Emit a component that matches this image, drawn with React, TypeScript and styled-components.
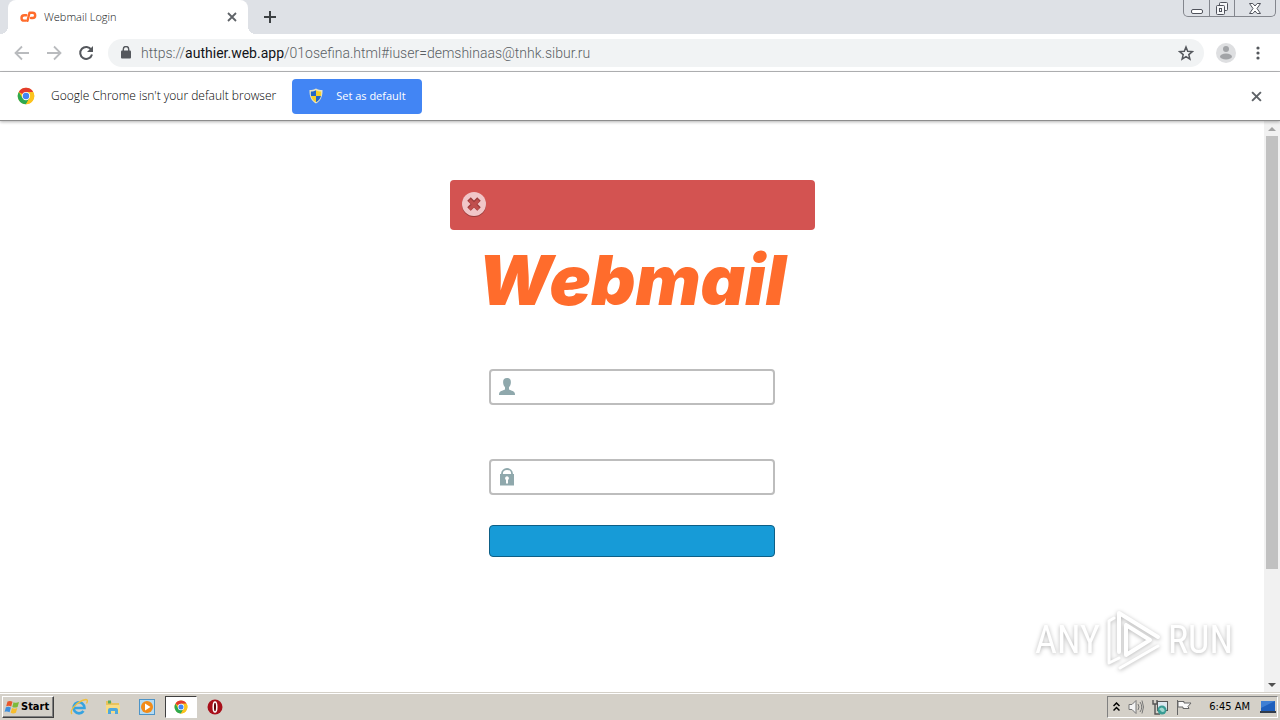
import React from "react";
import styled, { createGlobalStyle, css } from "styled-components";

const GlobalStyle = createGlobalStyle`
  * { box-sizing: border-box; }
  body { margin: 0; background: #fff; font-family: "Open Sans", "Noto Sans", sans-serif; }
  button, input { font: inherit; }
`;

const Screen = styled.div`
  display: flex;
  flex-direction: column;
  min-height: 100vh;
`;

const iconButton = css`
  display: flex;
  align-items: center;
  justify-content: center;
  padding: 0;
  border: 0;
  background: none;
`;

const IconButton = styled.button<{ $size: number }>`
  ${iconButton}
  flex: none;
  width: ${(p) => p.$size}px;
  height: ${(p) => p.$size}px;
`;

const TabStrip = styled.header`
  display: flex;
  align-items: flex-start;
  height: 34px;
  padding: 0 4px 0 8px;
  background: #dee1e6;
`;

const Tab = styled.div`
  position: relative;
  display: flex;
  align-items: center;
  gap: 7px;
  width: 240px;
  height: 34px;
  padding: 0 8px 0 12px;
  border-radius: 8px 8px 0 0;
  background: #fff;
  &::before,
  &::after {
    content: "";
    position: absolute;
    bottom: 0;
    width: 8px;
    height: 8px;
  }
  &::before {
    right: 100%;
    background: radial-gradient(circle at 0 0, transparent 8px, #fff 8px);
  }
  &::after {
    left: 100%;
    background: radial-gradient(circle at 100% 0, transparent 8px, #fff 8px);
  }
`;

const TabTitle = styled.span`
  flex: 1;
  font-size: 11px;
  font-weight: 300;
  line-height: 16px;
  color: #101214;
`;

const NewTab = styled.div`
  display: flex;
  align-items: center;
  height: 34px;
  margin-left: 12px;
`;

const WindowControls = styled.div`
  display: flex;
  height: 17px;
  margin-left: auto;
  border: 1px solid #83868d;
  border-top: 0;
  border-radius: 0 0 5px 5px;
  overflow: hidden;
`;

const WindowButton = styled.button<{ $wide?: boolean }>`
  ${iconButton}
  width: ${(p) => (p.$wide ? 41 : 25)}px;
  & + & { border-left: 1px solid #83868d; }
`;

const Toolbar = styled.nav`
  display: flex;
  align-items: center;
  gap: 12px;
  height: 38px;
  padding: 0 12px;
  border-bottom: 1px solid #b6b7b9;
  background: #fff;
`;

const AddressBar = styled.div`
  display: flex;
  flex: 1;
  align-items: center;
  gap: 5px;
  height: 28px;
  padding: 0 8px;
  border-radius: 14px;
  background: #f1f3f4;
`;

const Address = styled.div`
  flex: 1;
  font-family: Roboto, sans-serif;
  font-size: 14px;
  font-weight: 300;
  line-height: 20px;
  color: #5a5f64;
  white-space: nowrap;
  outline: none;
`;

const Host = styled.span`
  color: #111418;
  font-weight: 400;
`;

const InfoBar = styled.section`
  position: relative;
  display: flex;
  align-items: center;
  height: 49px;
  padding: 0 14px 0 17px;
  border-bottom: 1px solid #8d8d8d;
  box-shadow: 0 1px 3px rgba(0, 0, 0, 0.3);
  background: #fff;
`;

const InfoText = styled.p`
  margin: 0 16px;
  font-size: 12px;
  font-weight: 300;
  line-height: 20px;
  color: #000;
`;

const DefaultButton = styled.button`
  display: flex;
  align-items: center;
  gap: 12px;
  height: 35px;
  padding: 0 16px;
  border: 0;
  border-radius: 4px;
  background: #4285f4;
  color: #fff;
  font-size: 11px;
  line-height: 16px;
`;

const Push = styled.div`
  margin-left: auto;
`;

const Viewport = styled.div`
  display: flex;
  flex: 1;
`;

const Page = styled.main`
  display: flex;
  flex: 1;
  flex-direction: column;
  align-items: center;
  padding-top: 59px;
`;

const Alert = styled.div`
  display: flex;
  width: 365px;
  height: 50px;
  padding: 11px;
  border-radius: 4px;
  background: #d35351;
`;

const Wordmark = styled.h1`
  margin: 16px 0 0;
  font-family: Inter, Roboto, sans-serif;
  font-size: 69px;
  font-style: italic;
  font-weight: 900;
  line-height: 68px;
  color: #ff6c2c;
`;

const Form = styled.form`
  display: flex;
  flex-direction: column;
  width: 286px;
  padding-top: 55px;
`;

const Field = styled.label<{ $gap: number }>`
  display: flex;
  align-items: center;
  gap: 8px;
  height: 36px;
  margin-bottom: ${(p) => p.$gap}px;
  padding: 0 8px;
  border: 2px solid #bdbdbd;
  border-radius: 4px;
  background: #fff;
`;

const FieldInput = styled.input`
  flex: 1;
  min-width: 0;
  height: 28px;
  padding: 0;
  border: 0;
  outline: 0;
  background: none;
  font-size: 14px;
`;

const Submit = styled.button`
  height: 32px;
  border: 1px solid #0d5f86;
  border-radius: 4px;
  background: #179bd7;
`;

const ScrollBar = styled.div`
  display: flex;
  flex-direction: column;
  align-items: center;
  width: 16px;
  background: #f1f1f1;
`;

const ScrollTrack = styled.div`
  flex: 1;
  width: 12px;
`;

const ScrollThumb = styled.div`
  height: 80%;
  background: #c1c1c1;
`;

const ScrollArrow = styled.button`
  ${iconButton}
  width: 16px;
  height: 15px;
`;

const Watermark = styled.div`
  position: absolute;
  right: 47px;
  bottom: 48px;
  display: flex;
  align-items: center;
  gap: 6px;
  color: #fff;
  font-family: "Roboto Condensed", "Open Sans Condensed", Lato, sans-serif;
  font-size: 38px;
  line-height: 64px;
  filter: drop-shadow(0 1px 2px rgba(0, 0, 0, 0.3));
`;

const TaskBar = styled.footer`
  display: flex;
  align-items: center;
  height: 28px;
  padding: 0 2px;
  border-top: 1px solid #d4d0c8;
  box-shadow: inset 0 1px 0 #fff;
  background: #d4d0c8;
  font-family: "DejaVu Sans Condensed", "DejaVu Sans", sans-serif;
  font-size: 11px;
  line-height: 16px;
`;

const StartButton = styled.button`
  display: flex;
  align-items: center;
  height: 22px;
  padding: 0 4px 0 1px;
  border: 1px solid;
  border-color: #fff #404040 #404040 #fff;
  box-shadow: inset -1px -1px 0 #808080;
  background: #d4d0c8;
  font-weight: 700;
`;

const Launchers = styled.div`
  display: flex;
  align-items: center;
  gap: 2px;
  margin-left: 9px;
`;

const Launcher = styled.button<{ $active?: boolean }>`
  ${iconButton}
  width: 32px;
  height: 22px;
  ${(p) =>
    p.$active &&
    css`
      border: 1px solid;
      border-color: #404040 #fff #fff #404040;
      background: #fff;
    `}
`;

const Tray = styled.div`
  display: flex;
  align-items: center;
  height: 22px;
  margin-left: auto;
  padding: 0 1px 0 5px;
  gap: 8px;
  border: 1px solid;
  border-color: #808080 #fff #fff #808080;
`;

const Clock = styled.time`
  margin: 0 2px 0 9px;
`;

const CloseGlyph = ({ size }: { size: number }) => (
  <svg width={size} height={size} viewBox="0 0 10 10" stroke="#5f6368" strokeWidth="1.8">
    <path d="M1 1l8 8M9 1l-8 8" />
  </svg>
);

const ChromeLogo = ({ size }: { size: number }) => (
  <svg width={size} height={size} viewBox="0 0 48 48">
    <circle cx="24" cy="24" r="22" fill="#fbc116" />
    <path d="M24 24L4.9 13A22 22 0 0 1 43.1 13H24z" fill="#e33b2e" />
    <path d="M4.9 13A22 22 0 0 0 24 46l9.5-16.5L24 24 14.5 29.5z" fill="#2da94f" />
    <path d="M24 13h19.1A22 22 0 0 1 24 46l9.5-16.5z" fill="#fcc31e" />
    <circle cx="24" cy="24" r="11" fill="#fff" />
    <circle cx="24" cy="24" r="8.6" fill="#4285f4" />
  </svg>
);

const Shield = () => (
  <svg width="16" height="16" viewBox="0 0 16 16">
    <path d="M8 0.500c2 1.300 4 1.600 6.500 1.600C14.700 9 12.500 13 8 15.600 3.500 13 1.300 9 1.500 2.100 4 2.100 6 1.800 8 .5z" fill="#e9e5c4" />
    <path d="M8 2.300V8H3C2.800 6.500 2.800 5 2.900 3.600 5 3.500 6.500 3.100 8 2.300z" fill="#2467c9" />
    <path d="M8 2.300V8h5c.2-1.500.2-3 .1-4.400-2.100-.1-3.600-.5-5.100-1.300z" fill="#f6d02b" />
    <path d="M8 8v6.200C5.200 12.700 3.600 10.600 3 8z" fill="#f6d02b" />
    <path d="M8 8v6.200c2.800-1.500 4.400-3.600 5-6.200z" fill="#2467c9" />
  </svg>
);

export default function App() {
  return (
    <Screen>
      <GlobalStyle />
      <TabStrip>
        <Tab>
          <svg width="17" height="12" viewBox="0 0 17 12" fill="none" stroke="#ff6c2c" strokeWidth="2.400" strokeLinecap="round" strokeLinejoin="round">
            <path d="M6.300 4.200H4.200a2.700 2.700 0 0 0 0 5.400H5.800" />
            <path d="M7.500 9.800L9.500 1.800H12.600a2.600 2.600 0 0 1 0 5.200H11" />
          </svg>
          <TabTitle>Webmail Login</TabTitle>
          <IconButton $size={16} aria-label="Close tab"><CloseGlyph size={10} /></IconButton>
        </Tab>
        <NewTab>
          <IconButton $size={20} aria-label="New tab">
            <svg width="12" height="12" viewBox="0 0 12 12" stroke="#3c4043" strokeWidth="2"><path d="M6 0v12M0 6h12" /></svg>
          </IconButton>
        </NewTab>
        <WindowControls>
          <WindowButton aria-label="Minimize">
            <svg width="14" height="15" viewBox="0 0 14 15"><rect x="1.500" y="8.500" width="11" height="4" rx="1.500" fill="#fff" stroke="#50535c" /></svg>
          </WindowButton>
          <WindowButton aria-label="Restore">
            <svg width="14" height="15" viewBox="0 0 14 15" fill="#f5f6f8" stroke="#50535c">
              <rect x="4.500" y="1.500" width="8" height="8" rx="1" />
              <rect x="1.500" y="4.500" width="8" height="9" rx="1" />
              <rect x="4.500" y="7.500" width="2" height="3" />
            </svg>
          </WindowButton>
          <WindowButton $wide aria-label="Close window">
            <svg width="14" height="15" viewBox="0 0 14 15" fill="#fff" stroke="#50535c">
              <path d="M1.500 2.500h3.300L7 5l2.200-2.500h3.300L9 7.500l3.500 5H9.200L7 10l-2.200 2.500H1.500L5 7.500z" />
            </svg>
          </WindowButton>
        </WindowControls>
      </TabStrip>

      <Toolbar>
        <IconButton $size={20} aria-label="Back">
          <svg width="16" height="16" viewBox="0 0 16 16" fill="none" stroke="#b9bbbe" strokeWidth="1.800"><path d="M15 8H2M8 1.500L1.500 8 8 14.500" /></svg>
        </IconButton>
        <IconButton $size={20} aria-label="Forward">
          <svg width="16" height="16" viewBox="0 0 16 16" fill="none" stroke="#b9bbbe" strokeWidth="1.800"><path d="M1 8h13M8 1.500L14.500 8 8 14.500" /></svg>
        </IconButton>
        <IconButton $size={20} aria-label="Reload">
          <svg width="16" height="16" viewBox="0 0 16 16" fill="none" stroke="#55585d" strokeWidth="2"><path d="M13.300 4.700A6 6 0 1 0 14 9.500" /><path d="M15 1v6H9z" fill="#55585d" stroke="none" /></svg>
        </IconButton>
        <AddressBar>
          <IconButton $size={20} aria-label="Site information">
            <svg width="10" height="13" viewBox="0 0 10 13"><rect y="4.500" width="10" height="8" rx="1" fill="#55585d" /><path d="M2.300 5V3.200a2.700 2.700 0 0 1 5.400 0V5" fill="none" stroke="#55585d" strokeWidth="1.400" /></svg>
          </IconButton>
          <Address role="textbox" aria-label="Address" contentEditable suppressContentEditableWarning spellCheck={false}>
            https://<Host>authier.web.app</Host>/01osefina.html#iuser=demshinaas@tnhk.sibur.ru
          </Address>
          <IconButton $size={20} aria-label="Bookmark">
            <svg width="16" height="16" viewBox="0 0 16 16" fill="none" stroke="#55585d" strokeWidth="1.500"><path d="M8 2l1.700 4.300 4.600.3-3.500 3 1.100 4.500L8 11.600l-3.900 2.500 1.100-4.500-3.500-3 4.600-.3z" /></svg>
          </IconButton>
        </AddressBar>
        <IconButton $size={20} aria-label="Profile">
          <svg width="20" height="20" viewBox="0 0 20 20"><circle cx="10" cy="10" r="10" fill="#dedfe1" /><circle cx="10" cy="6" r="3" fill="#a2a4a7" /><ellipse cx="10" cy="13.500" rx="6" ry="3" fill="#a2a4a7" /></svg>
        </IconButton>
        <IconButton $size={20} aria-label="Menu">
          <svg width="4" height="14" viewBox="0 0 4 14" fill="#55585d"><circle cx="2" cy="2" r="1.600" /><circle cx="2" cy="7" r="1.600" /><circle cx="2" cy="12" r="1.600" /></svg>
        </IconButton>
      </Toolbar>

      <InfoBar>
        <ChromeLogo size={18} />
        <InfoText>Google Chrome isn't your default browser</InfoText>
        <DefaultButton><Shield />Set as default</DefaultButton>
        <Push><IconButton $size={20} aria-label="Dismiss"><CloseGlyph size={11} /></IconButton></Push>
      </InfoBar>

      <Viewport>
        <Page>
          <Alert role="alert">
            <svg width="26" height="28" viewBox="0 0 26 28">
              <circle cx="13" cy="14" r="12" fill="#983a39" />
              <circle cx="13" cy="13" r="12" fill="#f1c6c8" />
              <path d="M8 8l10 10M18 8l-10 10" stroke="#9c3c3c" strokeWidth="5" />
              <path d="M8.500 9.200l9 9M17.500 9.200l-9 9" stroke="#c04f4e" strokeWidth="3.400" />
            </svg>
          </Alert>
          <Wordmark>Webmail</Wordmark>
          <Form onSubmit={(e: React.FormEvent) => e.preventDefault()}>
            <Field $gap={54}>
              <svg width="16" height="18" viewBox="0 0 16 18" fill="#8fa8ac"><path d="M8 0c2.700 0 4 1.700 3.900 4.200 0 2.200-.9 4-1.900 5v2c.6 1.200 5 1.500 5.700 3.600.3.800.3 1.500.3 2.200H0c0-.7 0-1.400.3-2.200C1 12.700 5.400 12.400 6 11.200v-2c-1-1-1.900-2.800-1.900-5C4 1.700 5.300 0 8 0z" /></svg>
              <FieldInput type="text" aria-label="Email address" />
            </Field>
            <Field $gap={30}>
              <svg width="16" height="18" viewBox="0 0 16 18"><path d="M3 7V5.500a5 4.500 0 0 1 10 0V7" fill="none" stroke="#8fa8ac" strokeWidth="1.800" /><path d="M1 6h14v11.500H1z" fill="#8fa8ac" /><path d="M8 8.200a2 2 0 0 1 1 3.700V15.500H7v-3.600a2 2 0 0 1 1-3.700z" fill="#fff" /></svg>
              <FieldInput type="password" aria-label="Password" />
            </Field>
            <Submit type="submit" aria-label="Log in" />
          </Form>
        </Page>
        <ScrollBar>
          <ScrollArrow aria-label="Scroll up"><svg width="8" height="4" viewBox="0 0 8 4"><path d="M0 4l4-4 4 4z" fill="#a3a3a3" /></svg></ScrollArrow>
          <ScrollTrack><ScrollThumb /></ScrollTrack>
          <ScrollArrow aria-label="Scroll down"><svg width="8" height="4" viewBox="0 0 8 4"><path d="M0 0l4 4 4-4z" fill="#505050" /></svg></ScrollArrow>
        </ScrollBar>
      </Viewport>

      <Watermark>
        <span>ANY</span>
        <svg width="56" height="64" viewBox="0 0 56 64" fill="none" stroke="#fff" strokeWidth="4" strokeLinejoin="round" strokeLinecap="round">
          <path d="M13 44V5l39 24M20 17v30l24-15M20 17l24 15" />
          <path d="M8 10l-5 3v42l10-5M14 60l38-22" strokeWidth="3" />
        </svg>
        <span>RUN</span>
      </Watermark>

      <TaskBar>
        <StartButton>
          <svg width="17" height="16" viewBox="0 0 17 16">
            <path d="M3.500 2.500c2-1 3.500-.7 5 .2L7.200 7.500c-1.700-.9-3.200-1-5-.2z" fill="#e8572b" />
            <path d="M9.500 3.200c1.600.8 3.300.9 5.500-.1l-1.400 4.800c-2 .9-3.700.8-5.300 0z" fill="#7dba3b" />
            <path d="M1.900 8.200c1.800-.8 3.300-.7 5 .2l-1.300 4.800c-1.600-.8-3.200-1-5-.2z" fill="#3d8fdd" />
            <path d="M8 9c1.600.8 3.300.9 5.300 0l-1.400 4.800c-2 .9-3.600.8-5.200 0z" fill="#f7bd2d" />
          </svg>
          Start
        </StartButton>
        <Launchers>
          <Launcher aria-label="Internet Explorer">
            <svg width="18" height="18" viewBox="0 0 18 18" fill="none"><path d="M4 10h10.500A5.500 5.500 0 1 0 13.500 13" stroke="#36a3e0" strokeWidth="2.600" /><path d="M2 16C-1 13 7 3 16 1.500c2 0 1.500 2 .5 4" stroke="#f0bf3c" strokeWidth="1.300" /></svg>
          </Launcher>
          <Launcher aria-label="File Explorer">
            <svg width="16" height="16" viewBox="0 0 16 16"><path d="M1 2h5l1 2h7v9H1z" fill="#e9c25c" /><path d="M3 1.500h3v3H3z" fill="#5cab5c" /><path d="M1 6h14v8H1z" fill="#f8dc84" /><path d="M3 15v-4a2 2 0 0 1 2-2h6a2 2 0 0 1 2 2v4h-3v-3H6v3z" fill="#4fa8dc" /></svg>
          </Launcher>
          <Launcher aria-label="Media Player">
            <svg width="16" height="16" viewBox="0 0 16 16"><rect x=".5" y=".5" width="15" height="15" fill="#b4dbf3" stroke="#4d94c7" /><circle cx="8" cy="8" r="6" fill="#f28b18" /><path d="M6 4.500L11.500 8 6 11.500z" fill="#fff" /></svg>
          </Launcher>
          <Launcher $active aria-label="Google Chrome"><ChromeLogo size={14} /></Launcher>
          <Launcher aria-label="Opera">
            <svg width="16" height="16" viewBox="0 0 16 16"><circle cx="8" cy="8" r="7.500" fill="#a80f1a" /><ellipse cx="8" cy="8" rx="1.800" ry="5" fill="#5c0509" stroke="#fff" strokeWidth="1.500" /></svg>
          </Launcher>
        </Launchers>
        <Tray>
          <svg width="7" height="10" viewBox="0 0 7 10" fill="none" stroke="#000" strokeWidth="1.500"><path d="M.5 4l3-3 3 3M.5 8.500l3-3 3 3" /></svg>
          <svg width="16" height="16" viewBox="0 0 16 16" fill="#f4f4f4" stroke="#777"><path d="M1 5.500h3l4-4v13l-4-4H1z" /><path d="M10 5q2 3 0 6M12 3q3.500 5 0 10M14 1.500q3 6.500 0 13" fill="none" /></svg>
          <svg width="16" height="16" viewBox="0 0 16 16"><rect x="5.500" y="2.500" width="10" height="9" fill="#dce8f0" stroke="#555" /><path d="M1 1v4h4V1M3 5v10h5" fill="none" stroke="#555" strokeWidth="1.400" /><circle cx="10" cy="11" r="4.500" fill="#3a9c94" /><path d="M7 10q3-3 5 0t-2 3z" fill="#9fd6cf" /></svg>
          <svg width="16" height="16" viewBox="0 0 16 16" fill="#fafafa" stroke="#666"><path d="M1.500 1v15M2 2.500h6v1.500h7l-3 3.500 1 2H7V8H2z" /></svg>
          <Clock>6:45 AM</Clock>
          <svg width="16" height="16" viewBox="0 0 16 16"><path d="M1 2h14v10H1z" fill="#1e5fbd" /><path d="M1 2h14L1 9z" fill="#3f7fd4" /><path d="M0 12h16v2H0z" fill="#333c4a" /></svg>
        </Tray>
      </TaskBar>
    </Screen>
  );
}
